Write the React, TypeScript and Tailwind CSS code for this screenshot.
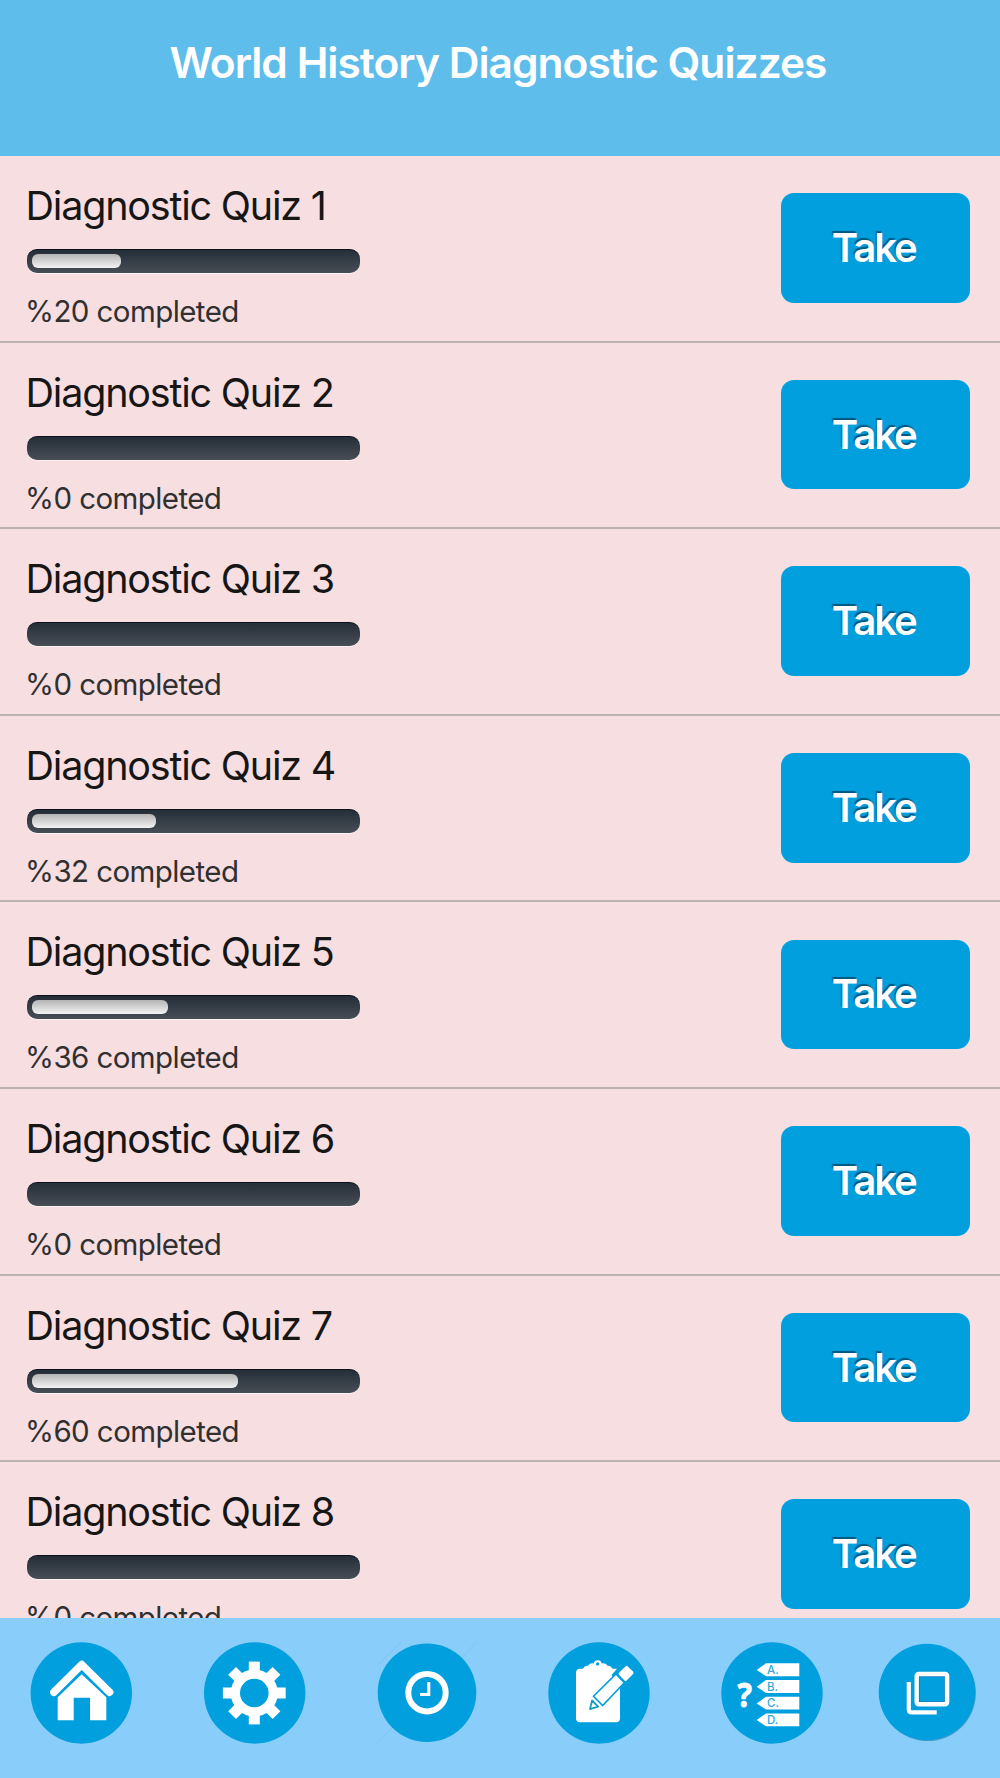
import type { ReactNode } from "react";

interface Quiz {
  title: string;
  completed: number;
}

interface NavItem {
  label: string;
  icon: ReactNode;
  className: string;
}

const quizzes: Quiz[] = [
  { title: "Diagnostic Quiz 1", completed: 20 },
  { title: "Diagnostic Quiz 2", completed: 0 },
  { title: "Diagnostic Quiz 3", completed: 0 },
  { title: "Diagnostic Quiz 4", completed: 32 },
  { title: "Diagnostic Quiz 5", completed: 36 },
  { title: "Diagnostic Quiz 6", completed: 0 },
  { title: "Diagnostic Quiz 7", completed: 60 },
  { title: "Diagnostic Quiz 8", completed: 0 },
];

const HomeIcon = () => (
  <svg viewBox="0 0 102 102" className="block size-[102px]">
    <circle cx="51.3" cy="51" r="50.7" fill="#029fde" />
    <path
      d="M23.9 50.2 51.7 22.6 79.6 50.2"
      fill="none"
      stroke="#fff"
      strokeWidth="7.6"
      strokeLinecap="round"
      strokeLinejoin="round"
    />
    <path d="M51.7 32.3 76.3 55.3V78.3H60V55.7H43.7V78.3H27.7V55.3Z" fill="#fff" />
  </svg>
);

const GearIcon = () => (
  <svg viewBox="0 0 102 102" className="block size-[102px]">
    <circle cx="50.7" cy="51" r="50.7" fill="#029fde" />
    <circle cx="50.3" cy="51" r="18.9" fill="none" stroke="#fff" strokeWidth="9.2" />
    {[0, 45, 90, 135, 180, 225, 270, 315].map((angle) => (
      <rect
        key={angle}
        x="44.8"
        y="19.6"
        width="11"
        height="12"
        fill="#fff"
        transform={`rotate(${angle} 50.3 51)`}
      />
    ))}
  </svg>
);

const ClockIcon = () => (
  <svg viewBox="0 0 102 102" className="block size-[102px]">
    <path d="M.5 24 25 .5M85 17 100 .5M.5 101 20 82" stroke="#7cc0ec" strokeWidth="0.7" />
    <circle cx="51" cy="50.7" r="49.3" fill="#029fde" />
    <circle cx="51" cy="50.7" r="18.7" fill="none" stroke="#fff" strokeWidth="6" />
    <path d="M52.8 40V52.6H44" fill="none" stroke="#fff" strokeWidth="3" />
  </svg>
);

const NotesIcon = () => (
  <svg viewBox="0 0 102 102" className="block size-[102px]">
    <circle cx="51" cy="51" r="50.7" fill="#029fde" />
    <path
      d="M28 31Q28 26.7 32 26.7H35Q36.5 23.4 40 23.8Q41.5 21 45.7 21.4A4.1 4.1 0 0 1 53.7 21.4Q58 21 59.7 23.8Q63 23.4 64.5 26.7H68Q72 26.7 72 31V76Q72 80.3 68 80.3H32Q28 80.3 28 76Z"
      fill="#fff"
    />
    <circle cx="49.7" cy="21.9" r="1.7" fill="#029fde" />
    <path d="M63.5 33 70 25.8 81 36 76.5 41 72.7 45Z" fill="#029fde" />
    <path
      d="M68 31.9 76.3 40.8 54.7 63.5 45.5 54.2Z"
      fill="#fff"
      stroke="#029fde"
      strokeWidth="1.6"
    />
    <path
      d="M78.6 25.6 83.8 30.8 77.7 37.2 72.4 31.8Z"
      fill="#fff"
      stroke="#fff"
      strokeWidth="3.4"
      strokeLinejoin="round"
    />
    <path
      d="M44.1 58.5 50.2 64.6 42 67.1Z"
      fill="#fff"
      stroke="#169fba"
      strokeWidth="1.8"
      strokeLinejoin="round"
    />
  </svg>
);

const AnswersIcon = () => (
  <svg viewBox="0 0 102 102" className="block size-[102px]">
    <circle cx="51" cy="51" r="50.7" fill="#029fde" />
    <text
      x="16.6"
      y="65"
      fontSize="34"
      fontWeight="700"
      fontFamily="Noto Sans, sans-serif"
      fill="#fff"
      stroke="#fff"
      strokeWidth="0.9"
      strokeLinejoin="round"
      textLength="14.4"
      lengthAdjust="spacingAndGlyphs"
    >
      ?
    </text>
    {["A.", "B.", "C.", "D."].map((letter, index) => (
      <g key={letter} transform={`translate(0 ${index * 16.7})`}>
        <path d="M35.7 28 45 21.3H78.3V34.2H45Z" fill="#fff" />
        <text
          x="46"
          y="32"
          fontSize="11.5"
          fontWeight="500"
          fontFamily="Inter, sans-serif"
          fill="#35a9dc"
        >
          {letter}
        </text>
      </g>
    ))}
  </svg>
);

const CopyIcon = () => (
  <svg viewBox="0 0 102 102" className="block size-[102px] overflow-visible">
    <circle cx="51.8" cy="51" r="48.1" fill="#4a9cc8" />
    <circle cx="51" cy="50" r="48.3" fill="#029fde" />
    <path
      d="M32.8 40V67.5Q32.8 70.4 35.7 70.4H60.7"
      fill="none"
      stroke="#fff"
      strokeWidth="4.2"
    />
    <rect x="43.3" y="34.3" width="25.6" height="25.6" fill="none" stroke="#2477b4" strokeWidth="1" />
    <rect
      x="40.7"
      y="32"
      width="30.4"
      height="30.2"
      rx="2"
      fill="none"
      stroke="#fff"
      strokeWidth="4.4"
    />
  </svg>
);

const navItems: NavItem[] = [
  { label: "Home", icon: <HomeIcon />, className: "" },
  { label: "Settings", icon: <GearIcon />, className: "ml-[72px]" },
  { label: "History", icon: <ClockIcon />, className: "ml-[69.7px]" },
  { label: "Notes", icon: <NotesIcon />, className: "ml-[70.3px]" },
  { label: "Quizzes", icon: <AnswersIcon />, className: "ml-[71px]" },
  { label: "Flashcards", icon: <CopyIcon />, className: "ml-[53.3px]" },
];

const ProgressBar = ({ completed }: { completed: number }) => (
  <div className="mt-[18px] flex h-6 w-[333px] items-start rounded-[10px] border-t border-[#0b121b] bg-linear-to-b from-[#252e38] to-[#484e56] pt-[4px] pl-[5px] shadow-[0_1px_0_#fdf0f1]">
    {completed > 0 && (
      <div
        className="h-[14px] rounded-[6px] bg-linear-to-b from-[#b4b4b4] to-[#f4f4f4]"
        style={{ width: `${31 + completed * 2.93}px` }}
      />
    )}
  </div>
);

const QuizRow = ({ title, completed }: Quiz) => (
  <li className="flex h-[186.6px] shrink-0 items-start justify-between border-b-2 border-[#bcb2b4] pr-[30.5px] pl-[26.5px]">
    <div className="pt-[25px]">
      <h2 className="-ml-[1px] h-[50px] text-[39.5px] leading-[50px] tracking-[-1.2px] whitespace-nowrap text-[#161616]">
        {title}
      </h2>
      <ProgressBar completed={completed} />
      <p className="mt-[19px] -ml-[1.5px] text-[29.5px] leading-[38px] tracking-[-0.58px] whitespace-nowrap text-[#303030]">
        %{completed} completed
      </p>
    </div>
    <button className="mt-[37.2px] h-[109.6px] w-[188.5px] rounded-[13px] bg-[#029fde] pr-[3px] text-[40px] font-semibold tracking-[-2px] text-white [text-shadow:-1px_-2px_1px_rgba(0,50,80,0.65)]">
      Take
    </button>
  </li>
);

const App = () => {
  return (
    <main className="flex h-[1778px] w-[1000px] flex-col overflow-hidden bg-[#f7dee0] font-['Inter',sans-serif]">
      <header className="h-[156px] shrink-0 bg-[#5fbdeb] pt-[38px] pr-[4px] text-center">
        <h1 className="text-[42.5px] leading-[50px] font-semibold tracking-[-0.98px] text-white">
          World History Diagnostic Quizzes
        </h1>
      </header>

      <ul className="flex min-h-0 flex-1 flex-col overflow-hidden">
        {quizzes.map((quiz) => (
          <QuizRow key={quiz.title} {...quiz} />
        ))}
      </ul>

      <nav className="flex h-[160px] shrink-0 bg-[#89cefb] pt-6 pl-[30px]">
        {navItems.map((item) => (
          <button
            key={item.label}
            aria-label={item.label}
            className={`size-[102px] shrink-0 ${item.className}`}
          >
            {item.icon}
          </button>
        ))}
      </nav>
    </main>
  );
};

export default App;
